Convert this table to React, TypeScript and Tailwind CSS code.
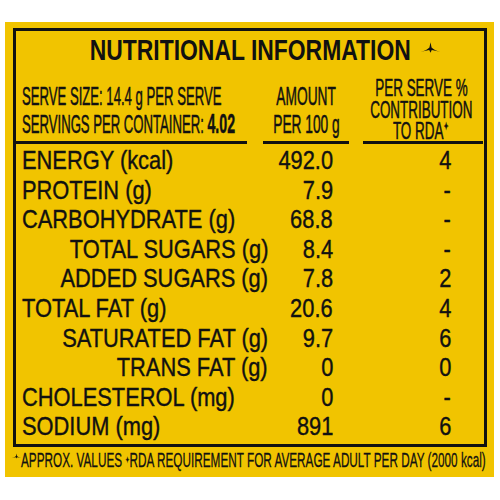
import React from 'react';

type Row = { label: string; amount: string; rda: string; sub?: boolean };

const rows: Row[] = [
  { label: 'ENERGY (kcal)', amount: '492.0', rda: '4' },
  { label: 'PROTEIN (g)', amount: '7.9', rda: '-' },
  { label: 'CARBOHYDRATE (g)', amount: '68.8', rda: '-' },
  { label: 'TOTAL SUGARS (g)', amount: '8.4', rda: '-', sub: true },
  { label: 'ADDED SUGARS (g)', amount: '7.8', rda: '2', sub: true },
  { label: 'TOTAL FAT (g)', amount: '20.6', rda: '4' },
  { label: 'SATURATED FAT (g)', amount: '9.7', rda: '6', sub: true },
  { label: 'TRANS FAT (g)', amount: '0', rda: '0', sub: true },
  { label: 'CHOLESTEROL (mg)', amount: '0', rda: '-' },
  { label: 'SODIUM (mg)', amount: '891', rda: '6' },
];

// little tripod mark used for "approx." values
function ApproxMark({ className }: { className?: string }) {
  return (
    <svg viewBox="0 0 18 10" className={className} fill="#111">
      <path d="M9 0 L10 5 Q12.5 7.8 18 9 L10.2 7.4 L9 10 L7.8 7.4 L0 9 Q5.5 7.8 8 5 Z" />
    </svg>
  );
}

export default function App() {
  return (
    <div className="w-[500px] h-[500px] bg-white pt-[22px] pl-[5px] text-[#111] font-['Liberation_Sans',Arial,sans-serif]">
      <div className="w-[489px] h-[455px] bg-[#F1C400] pt-[6px] pl-[8px]">
        {/* bordered table */}
        <div className="w-[474px] h-[419px] border-[3px] border-[#111]">
          <div className="relative pt-[5px] text-center">
            <span className="inline-block scale-x-[0.79] text-[29px] leading-[29px] font-bold whitespace-nowrap">
              NUTRITIONAL INFORMATION
            </span>
            <ApproxMark className="absolute left-[405px] top-[11px] w-[19px] h-[11px]" />
          </div>

          {/* column headers */}
          <div className="flex h-[74px] [-webkit-text-stroke:0.5px_#111]">
            <div className="w-[246px] shrink-0 pl-[6px] pt-[15px] text-[25px] leading-[28px] whitespace-nowrap">
              <div className="scale-x-[0.525] origin-left">SERVE SIZE: 14.4 g PER SERVE</div>
              <div className="scale-x-[0.525] origin-left">
                SERVINGS PER CONTAINER: <span className="font-bold text-[27px]">4.02</span>
              </div>
            </div>
            <div className="w-[88px] shrink-0 pt-[15px] text-[25px] leading-[28px] flex flex-col items-center whitespace-nowrap">
              <div className="w-max scale-x-[0.55]">AMOUNT</div>
              <div className="w-max scale-x-[0.55]">PER 100 g</div>
            </div>
            <div className="flex-1 min-w-0 pl-[8px] pt-[10px] text-[24px] leading-[21.5px] flex flex-col items-center whitespace-nowrap">
              <div className="w-max scale-x-[0.56]">PER SERVE %</div>
              <div className="w-max scale-x-[0.56]">CONTRIBUTION</div>
              <div className="w-max scale-x-[0.56]">
                TO RDA<span className="relative -top-[9px] text-[11px] font-['DejaVu_Sans',sans-serif]">✦</span>
              </div>
            </div>
          </div>

          {/* separator rules */}
          <div className="flex h-[3px]">
            <div className="w-[231px] bg-[#111]" />
            <div className="w-[16px]" />
            <div className="w-[86px] bg-[#111]" />
            <div className="w-[14px]" />
            <div className="w-[120px] bg-[#111]" />
          </div>

          <div className="mt-[2px] [-webkit-text-stroke:0.4px_#111]">
            {rows.map((r) => (
              <div key={r.label} className="flex h-[29.6px] text-[26px] leading-[29.6px] whitespace-nowrap">
                <div className={`w-[252px] shrink-0 pl-[6px] flex ${r.sub ? 'justify-end' : 'justify-start'}`}>
                  <span className={`w-max scale-x-[0.84] ${r.sub ? 'origin-right' : 'origin-left'}`}>{r.label}</span>
                </div>
                <div className="w-[65px] shrink-0 flex justify-end">
                  <span className="w-max scale-x-[0.84] origin-right">{r.amount}</span>
                </div>
                <div className="w-[118px] shrink-0 flex justify-end">
                  <span className="w-max scale-x-[0.84] origin-right">{r.rda}</span>
                </div>
              </div>
            ))}
          </div>
        </div>

        {/* footnote */}
        <div className="flex items-start pt-[2px] text-[21px] leading-[22px] whitespace-nowrap [-webkit-text-stroke:0.3px_#111]">
          <ApproxMark className="w-[9px] h-[6px] shrink-0 -ml-[1px] mt-[4px]" />
          <div className="scale-x-[0.56] origin-left">
            APPROX. VALUES <span className="relative -top-[4px] text-[9px] font-['DejaVu_Sans',sans-serif]">✦</span>RDA REQUIREMENT FOR AVERAGE ADULT PER DAY (2000 kcal)
          </div>
        </div>
      </div>
    </div>
  );
}
